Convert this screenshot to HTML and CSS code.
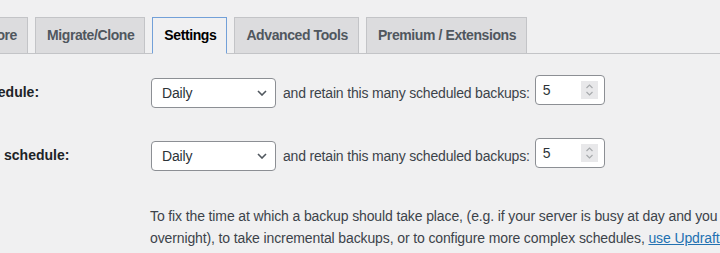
FILE: index.html
```html
<!DOCTYPE html>
<html lang="en">
<head>
  <meta charset="UTF-8" />
  <title>UpdraftPlus - Settings</title>
  <link rel="stylesheet" href="styles.css">
</head>
<body>
  <div class="wrap">
    <nav class="tabs">
      <a class="tab">Backup / Restore</a>
      <a class="tab">Migrate/Clone</a>
      <a class="tab active">Settings</a>
      <a class="tab">Advanced Tools</a>
      <a class="tab">Premium / Extensions</a>
    </nav>

    <div class="form">
      <div class="row">
        <div class="label">Files backup schedule:</div>
        <div class="field">
          <div class="select">
            <span>Daily</span>
            <svg width="10" height="6" viewBox="0 0 10 6"><path d="M1 1l4 4 4-4" fill="none" stroke="#50575e" stroke-width="1.6"/></svg>
          </div>
          <span class="retain">and retain this many scheduled backups:</span>
          <div class="number">
            <span>5</span>
            <span class="spin">
              <svg width="9" height="14" viewBox="0 0 9 14"><path d="M1.5 5L4.5 2l3 3M1.5 9l3 3 3-3" fill="none" stroke="#a7aaad" stroke-width="1.2"/></svg>
            </span>
          </div>
        </div>
      </div>

      <div class="row">
        <div class="label">Database backup schedule:</div>
        <div class="field">
          <div class="select">
            <span>Daily</span>
            <svg width="10" height="6" viewBox="0 0 10 6"><path d="M1 1l4 4 4-4" fill="none" stroke="#50575e" stroke-width="1.6"/></svg>
          </div>
          <span class="retain">and retain this many scheduled backups:</span>
          <div class="number">
            <span>5</span>
            <span class="spin">
              <svg width="9" height="14" viewBox="0 0 9 14"><path d="M1.5 5L4.5 2l3 3M1.5 9l3 3 3-3" fill="none" stroke="#a7aaad" stroke-width="1.2"/></svg>
            </span>
          </div>
        </div>
      </div>

      <div class="row">
        <div class="label"></div>
        <p class="note">To fix the time at which a backup should take place, (e.g. if your server is busy at day and you want to run<br>overnight), to take incremental backups, or to configure more complex schedules, <a href="#">use UpdraftPlus Premium</a></p>
      </div>
    </div>
  </div>
</body>
</html>
```

FILE: styles.css
```css
html, body {
  margin: 0;
  background: #f0f0f1;
  overflow: hidden;
}

body {
  font-family: 'Liberation Sans', Arial, sans-serif;
  font-size: 14px;
  color: #3c434a;
  width: 720px;
  height: 253px;
}

.wrap {
  padding-top: 17px;
}

.tabs {
  display: flex;
  gap: 7px;
  border-bottom: 1px solid #c3c4c7;
  margin-left: -103px;
  padding-left: 0;
}

.tab {
  display: block;
  padding: 5px 10px 5px 11px;
  line-height: 25px;
  font-size: 14px;
  font-weight: 700;
  letter-spacing: -0.4px;
  color: #50575e;
  background: #dcdcde;
  border: 1px solid #c3c4c7;
  margin-bottom: -1px;
  white-space: nowrap;
  text-decoration: none;
}

.tab.active {
  background: #f0f0f1;
  color: #000;
  border-color: #72a0d8;
  border-bottom-color: #f0f0f1;
}

.form {
  display: grid;
  row-gap: 27px;
  padding-top: 21px;
  margin-left: -115px;
}

.row {
  display: grid;
  grid-template-columns: 265px 1fr;
  align-items: start;
}

.label {
  padding-top: 7px;
  line-height: 20px;
  font-weight: 700;
  color: #1d2327;
  white-space: nowrap;
}

.field {
  display: flex;
  align-items: center;
  letter-spacing: -0.18px;
}

.select {
  width: 125px;
  height: 30px;
  box-sizing: border-box;
  margin-left: 1px;
  padding: 0 8px 0 10px;
  display: flex;
  align-items: center;
  justify-content: space-between;
  background: #fff;
  border: 1px solid #8c8f94;
  border-radius: 4px;
  color: #2c3338;
}

.retain {
  margin: 0 5px 0 7px;
  white-space: nowrap;
}

.number {
  width: 70px;
  height: 30px;
  box-sizing: border-box;
  margin-bottom: 6px;
  padding: 0 6px 0 7px;
  display: flex;
  align-items: center;
  justify-content: space-between;
  background: #fff;
  border: 1px solid #8c8f94;
  border-radius: 4px;
  color: #2c3338;
}

.spin {
  width: 17px;
  height: 18px;
  background: #e8e8ea;
  display: flex;
  align-items: center;
  justify-content: center;
}

.note {
  margin: 4px 0 0;
  line-height: 22px;
  white-space: nowrap;
  letter-spacing: -0.12px;
}

.note a {
  color: #2271b1;
}
```
